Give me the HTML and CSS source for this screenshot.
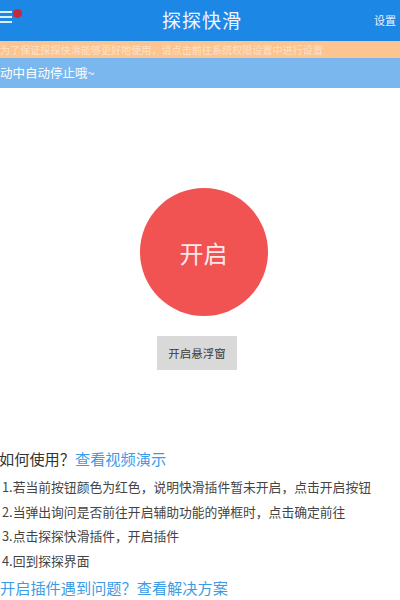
FILE: index.html
```html
<!DOCTYPE html>
<html lang="zh">
<head>
<meta charset="utf-8">
<link rel="stylesheet" href="styles.css">
</head>
<body>
<div class="app">
  <header class="topbar">
    <div class="menu">
      <span class="lines"><i></i><i></i><i></i></span>
      <span class="dot"></span>
    </div>
    <div class="title">探探快滑</div>
    <div class="setting">设置</div>
  </header>
  <div class="notice">为了保证探探快滑能够更好地使用，请点击前往系统权限设置中进行设置</div>
  <div class="marquee"><span>动中自动停止哦~</span></div>
  <main class="main">
    <div class="circle-wrap">
      <div class="circle">开启</div>
    </div>
    <div class="float-btn">开启悬浮窗</div>
    <section class="help">
      <h2 class="help-title">如何使用？<span class="link">查看视频演示</span></h2>
      <ol class="steps">
        <li>1.若当前按钮颜色为红色，说明快滑插件暂未开启，点击开启按钮</li>
        <li>2.当弹出询问是否前往开启辅助功能的弹框时，点击确定前往</li>
        <li>3.点击探探快滑插件，开启插件</li>
        <li>4.回到探探界面</li>
      </ol>
      <div class="problem">开启插件遇到问题？查看解决方案</div>
    </section>
  </main>
</div>
</body>
</html>
```
FILE: styles.css
```css
* { box-sizing: border-box; margin: 0; padding: 0; }
html, body { width: 400px; height: 600px; overflow: hidden; background: #fff; }
body { font-family: "Noto Sans CJK SC", "Noto Sans", sans-serif; color: #333; }

.topbar {
  height: 41px;
  background: #1d87e6;
  display: grid;
  grid-template-columns: 1fr auto 1fr;
  align-items: center;
  color: #fff;
}
.menu { position: relative; height: 41px; }
.lines {
  display: flex; flex-direction: column; gap: 3px;
  width: 12px; padding-top: 11px;
}
.lines i { display: block; height: 2px; background: rgba(255,255,255,0.85); }
.dot {
  position: absolute; left: 13px; top: 9px;
  width: 9px; height: 9px; border-radius: 50%;
  background: #c8283c;
}
.title { font-size: 19px; letter-spacing: 1px; padding-left: 4px; padding-bottom: 3px; color: #eef6ff; }
.setting { justify-self: end; font-size: 11px; padding-right: 4px; padding-bottom: 2px; color: #e8f2ff; }

.notice {
  height: 17px;
  background: #fcc490;
  color: #fee2c6;
  font-size: 10.1px;
  line-height: 17px;
  white-space: nowrap;
  overflow: hidden;
}
.marquee {
  height: 30px;
  background: #7bb7ef;
  color: #fff;
  font-size: 12.5px;
  line-height: 30px;
  white-space: nowrap;
}

.main { display: flex; flex-direction: column; }
.circle-wrap {
  display: flex; justify-content: center;
  padding-top: 100px; padding-left: 7px;
}
.circle {
  width: 128px; height: 128px; border-radius: 50%;
  background: #f15353;
  color: #fde8e8;
  font-size: 24px;
  display: flex; align-items: center; justify-content: center;
}
.float-btn {
  align-self: center;
  margin-top: 20px; margin-right: 6px;
  width: 80px; height: 34px;
  background: #d9d9d9;
  color: #3a3a3a;
  font-size: 11.5px;
  display: flex; align-items: center; justify-content: center;
}
.help { padding-top: 77px; }
.help-title {
  font-size: 15.2px; font-weight: normal; color: #333;
  line-height: 22px; margin-left: -1px;
}
.link { color: #3c9be6; }
.steps { list-style: none; margin-top: 6px; padding-left: 2px; }
.steps li {
  font-size: 12.8px; color: #444;
  line-height: 24.6px; white-space: nowrap;
}
.problem {
  margin-top: 3px;
  font-size: 15.2px; color: #3c9be6; line-height: 22px;
}
```
